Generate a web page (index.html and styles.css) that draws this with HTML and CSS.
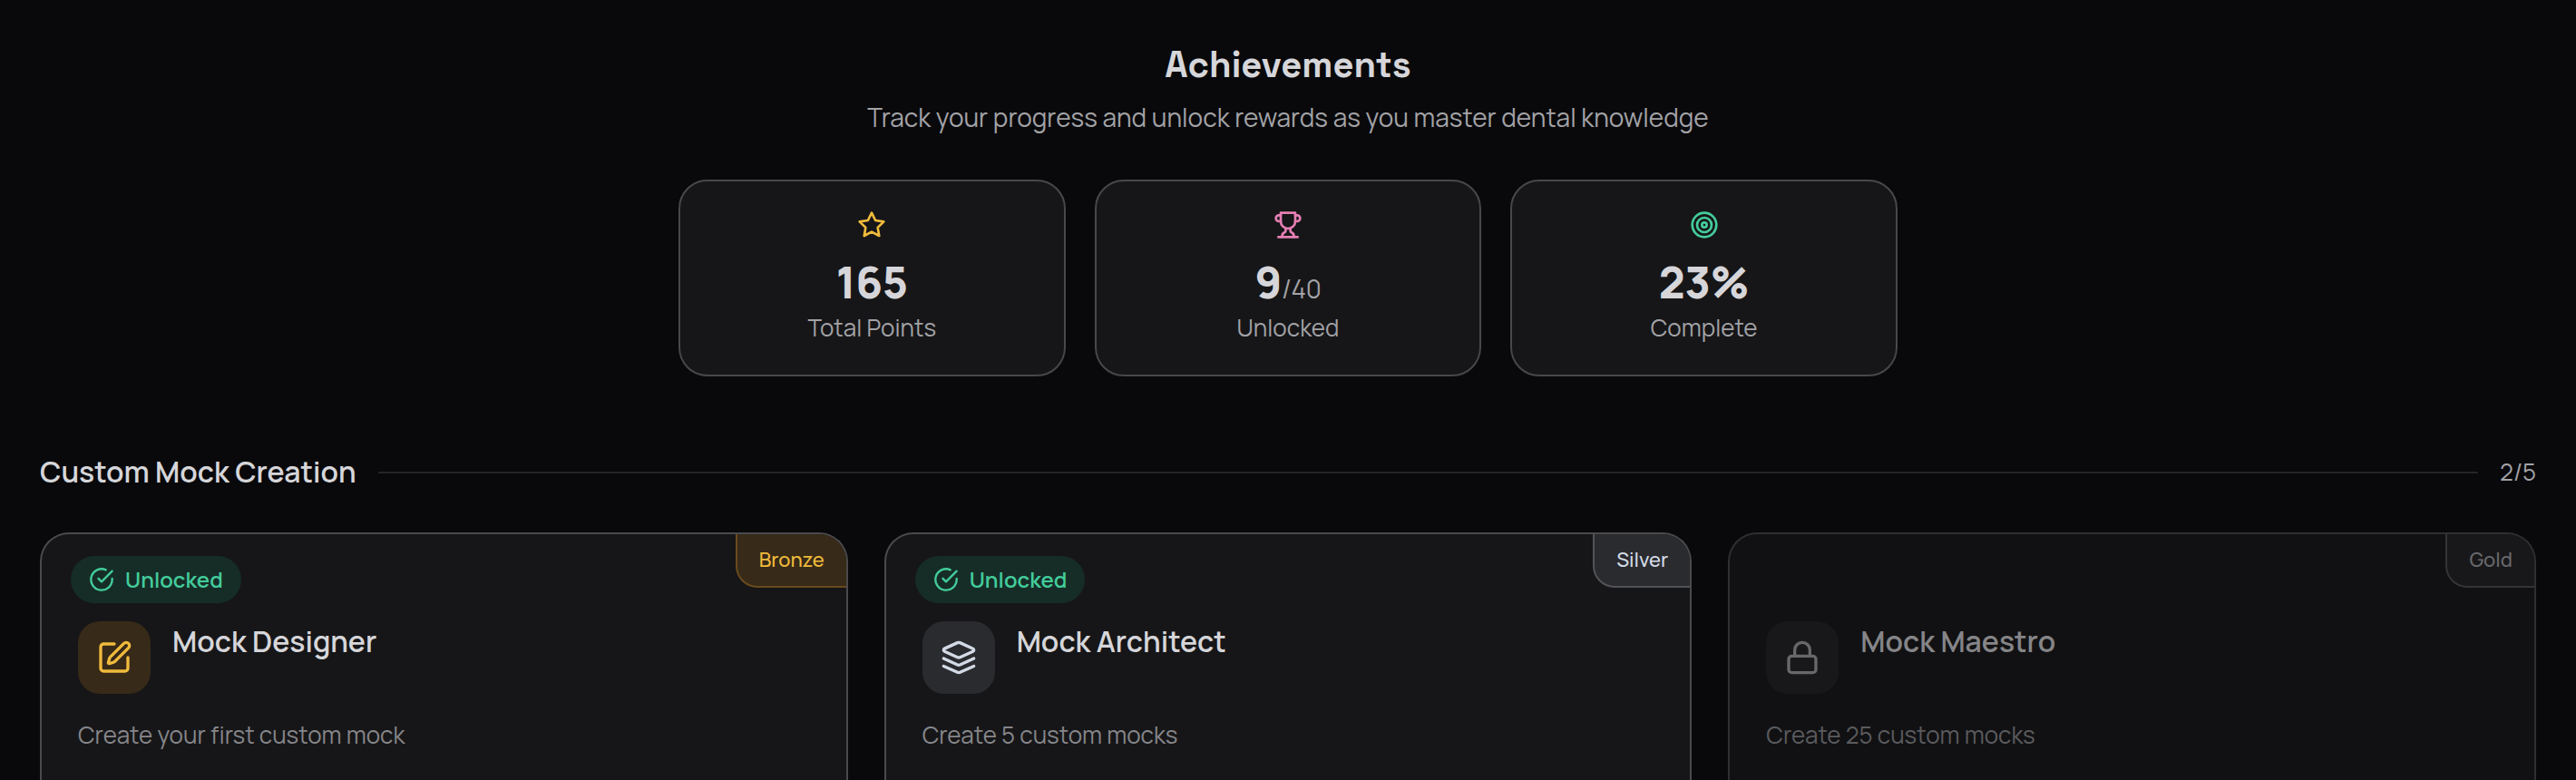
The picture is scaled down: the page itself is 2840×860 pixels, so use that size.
FILE: index.html
```html
<!DOCTYPE html>
<html lang="en">
<head>
    <meta charset="UTF-8">
    <meta name="viewport" content="width=device-width, initial-scale=1.0">
    <title>Achievements</title>
    <link rel="stylesheet" href="styles.css">
</head>
<body>

    <header class="header">
        <h1>Achievements</h1>
        <p>Track your progress and unlock rewards as you master dental knowledge</p>
    </header>

    <div class="stats">
        <div class="stat">
            <svg class="icon star" viewBox="0 0 24 24"><polygon points="12 2 15.09 8.26 22 9.27 17 14.14 18.18 21.02 12 17.77 5.82 21.02 7 14.14 2 9.27 8.91 8.26 12 2"/></svg>
            <div class="stat-value">165</div>
            <div class="stat-label">Total Points</div>
        </div>
        <div class="stat">
            <svg class="icon trophy" viewBox="0 0 24 24"><path d="M6 9H4.5a2.5 2.5 0 0 1 0-5H6"/><path d="M18 9h1.5a2.5 2.5 0 0 0 0-5H18"/><path d="M4 22h16"/><path d="M10 14.66V17c0 .55-.47.98-.97 1.21C7.85 18.75 7 20.24 7 22"/><path d="M14 14.66V17c0 .55.47.98.97 1.21C16.15 18.75 17 20.24 17 22"/><path d="M18 2H6v7a6 6 0 0 0 12 0V2Z"/></svg>
            <div class="stat-value">9<span class="stat-total">/40</span></div>
            <div class="stat-label">Unlocked</div>
        </div>
        <div class="stat">
            <svg class="icon target" viewBox="0 0 24 24"><circle cx="12" cy="12" r="10"/><circle cx="12" cy="12" r="6"/><circle cx="12" cy="12" r="2"/></svg>
            <div class="stat-value">23%</div>
            <div class="stat-label">Complete</div>
        </div>
    </div>

    <div class="section-head">
        <h2>Custom Mock Creation</h2>
        <div class="line"></div>
        <span class="count">2/5</span>
    </div>

    <div class="grid">
        <div class="card">
            <span class="tier bronze">Bronze</span>
            <span class="unlocked">
                <svg class="icon" viewBox="0 0 24 24"><path d="M22 11.08V12a10 10 0 1 1-5.93-9.14"/><path d="m9 11 3 3L22 4"/></svg>
                Unlocked
            </span>
            <div class="card-top">
                <div class="card-icon bronze">
                    <svg class="icon" viewBox="0 0 24 24"><path d="M12 3H5a2 2 0 0 0-2 2v14a2 2 0 0 0 2 2h14a2 2 0 0 0 2-2v-7"/><path d="M18.375 2.625a2.121 2.121 0 1 1 3 3L12.36 14.64a2 2 0 0 1-.85.5l-2.87.84a.5.5 0 0 1-.62-.62l.84-2.87a2 2 0 0 1 .5-.85z"/></svg>
                </div>
                <h3>Mock Designer</h3>
            </div>
            <p>Create your first custom mock</p>
        </div>

        <div class="card">
            <span class="tier silver">Silver</span>
            <span class="unlocked">
                <svg class="icon" viewBox="0 0 24 24"><path d="M22 11.08V12a10 10 0 1 1-5.93-9.14"/><path d="m9 11 3 3L22 4"/></svg>
                Unlocked
            </span>
            <div class="card-top">
                <div class="card-icon silver">
                    <svg class="icon" viewBox="0 0 24 24"><path d="m12.83 2.18a2 2 0 0 0-1.66 0L2.6 6.08a1 1 0 0 0 0 1.83l8.58 3.91a2 2 0 0 0 1.66 0l8.58-3.9a1 1 0 0 0 0-1.83Z"/><path d="m22 17.65-9.17 4.16a2 2 0 0 1-1.66 0L2 17.65"/><path d="m22 12.65-9.17 4.16a2 2 0 0 1-1.66 0L2 12.65"/></svg>
                </div>
                <h3>Mock Architect</h3>
            </div>
            <p>Create 5 custom mocks</p>
        </div>

        <div class="card locked">
            <span class="tier">Gold</span>
            <div class="card-top">
                <div class="card-icon">
                    <svg class="icon" viewBox="0 0 24 24"><rect x="3" y="11" width="18" height="11" rx="2"/><path d="M7 11V7a5 5 0 0 1 10 0v4"/></svg>
                </div>
                <h3>Mock Maestro</h3>
            </div>
            <p>Create 25 custom mocks</p>
        </div>
    </div>

</body>
</html>
```
FILE: styles.css
```css
* {
    box-sizing: border-box;
    margin: 0;
}

body {
    height: 860px;
    overflow: hidden;
    padding: 47px 44px 0;
    background: #09090b;
    color: #d6d6da;
    font-family: Manrope, Inter, sans-serif;
}

.icon {
    display: block;
    flex-shrink: 0;
    fill: none;
    stroke: currentColor;
    stroke-width: 2;
    stroke-linecap: round;
    stroke-linejoin: round;
}

/* Header */
.header {
    text-align: center;
}

.header h1 {
    font-family: "Space Grotesk", Manrope, Inter, sans-serif;
    font-size: 40px;
    line-height: 49px;
    font-weight: 700;
}

.header p {
    margin-top: 13px;
    font-size: 28px;
    line-height: 40px;
    color: #a3a3a7;
}

/* Stats */
.stats {
    display: grid;
    grid-template-columns: repeat(3, 1fr);
    gap: 32px;
    width: 1344px;
    margin: 49px auto 0;
}

.stat {
    display: flex;
    flex-direction: column;
    align-items: center;
    padding: 32px;
    background: #161618;
    border: 2px solid #48484a;
    border-radius: 32px;
}

.stat .icon {
    width: 32px;
    height: 32px;
}

.star {
    color: #f0bb3c;
}

.trophy {
    color: #e57fb3;
}

.target {
    color: #43cc9b;
}

.stat-value {
    height: 47px;
    margin-top: 23px;
    font-size: 48px;
    line-height: 47px;
    font-weight: 800;
    letter-spacing: -0.3px;
}

.stat-total {
    font-size: 28px;
    line-height: 28px;
    font-weight: 400;
    color: #a3a3a7;
}

.stat-label {
    margin-top: 7px;
    font-size: 26px;
    line-height: 40px;
    color: #a3a3a7;
}

/* Section heading */
.section-head {
    display: flex;
    align-items: center;
    gap: 24px;
    margin: 84px 0 44px;
}

.section-head h2 {
    padding-bottom: 2px;
    font-size: 32px;
    line-height: 42px;
    font-weight: 600;
}

.line {
    flex: 1;
    height: 2px;
    background: #242426;
}

.count {
    padding-bottom: 2px;
    font-size: 26px;
    line-height: 42px;
    color: #a3a3a7;
}

/* Achievement cards */
.grid {
    display: grid;
    grid-template-columns: repeat(3, 1fr);
    gap: 40px;
}

.card {
    position: relative;
    height: 273px;
    padding: 96px 40px 0;
    overflow: hidden;
    background: #161618;
    border: 2px solid #4a4a4c;
    border-bottom: none;
    border-radius: 32px 32px 0 0;
}

.card-top {
    display: flex;
    gap: 24px;
}

.card-icon {
    display: flex;
    align-items: center;
    justify-content: center;
    width: 80px;
    height: 80px;
    border-radius: 24px;
}

.card-icon .icon {
    width: 40px;
    height: 40px;
}

.card h3 {
    margin-top: 2px;
    font-size: 32px;
    line-height: 40px;
    font-weight: 600;
}

.card p {
    margin-top: 25px;
    font-size: 26px;
    line-height: 40px;
    color: #86868a;
}

.tier {
    position: absolute;
    top: 0;
    right: 0;
    height: 59px;
    padding: 0 24px;
    border-left: 2px solid;
    border-bottom: 2px solid;
    border-bottom-left-radius: 24px;
    font-size: 22px;
    line-height: 56px;
    font-weight: 500;
}

.unlocked {
    position: absolute;
    top: 24px;
    left: 32px;
    display: flex;
    align-items: center;
    gap: 12px;
    height: 52px;
    padding: 0 20px;
    border-radius: 26px;
    background: #162d27;
    color: #43cc9b;
    font-size: 24px;
    line-height: 32px;
    font-weight: 600;
}

.unlocked .icon {
    width: 28px;
    height: 28px;
}

.bronze {
    background: #372a18;
    border-color: #6a4a1c;
    color: #f0bb3c;
}

.silver {
    background: #2a2b2f;
    border-color: #525356;
    color: #d3dae5;
}

/* Locked state */
.locked {
    background: #111113;
    border-color: #2f2f31;
}

.locked .tier,
.locked .card-icon {
    background: #18181a;
    border-color: #343436;
    color: #68686b;
}

.locked h3 {
    color: #858588;
}

.locked p {
    color: #5b5b5e;
}
```
